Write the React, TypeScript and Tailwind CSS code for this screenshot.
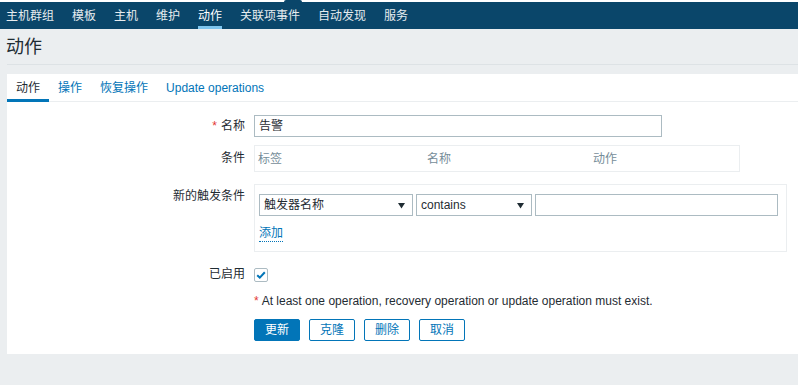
import React from "react";

const FONT = "font-['Liberation_Sans','Noto_Sans_CJK_SC',sans-serif]";

const navItems = ["主机群组", "模板", "主机", "维护", "动作", "关联项事件", "自动发现", "服务"];
const tabs = ["动作", "操作", "恢复操作", "Update operations"];

function Caret() {
  return (
    <svg width="7" height="7" viewBox="0 0 7 7" className="shrink-0">
      <path d="M0 1 L7 1 L3.5 6.5 Z" fill="#1f2c33" />
    </svg>
  );
}

function Select({ value, width }: { value: string; width: string }) {
  return (
    <div
      className={`${width} h-[22px] border border-[#acbbc2] bg-white flex items-center justify-between pl-[4px] pr-[7px] text-[12px] text-[#1f2c33] leading-[14px]`}
    >
      <span>{value}</span>
      <Caret />
    </div>
  );
}

function Row({
  label,
  required,
  children,
  labelClass = "pt-[4px]",
}: {
  label: string;
  required?: boolean;
  children: React.ReactNode;
  labelClass?: string;
}) {
  return (
    <div className="flex">
      <div className={`w-[238px] shrink-0 text-right text-[12px] leading-[14px] text-[#1f2c33] ${labelClass}`}>
        {required && <span className="text-[#e33734] mr-[4px]">*</span>}
        {label}
      </div>
      <div className="ml-[9px]">{children}</div>
    </div>
  );
}

export default function App() {
  return (
    <div className={`${FONT} w-full min-h-[385px] bg-[#ebeef0] text-[#1f2c33]`}>
      {/* top strip */}
      <div className="relative h-[2px] bg-white">
        <div className="absolute left-[284px] top-0 w-[18px] h-[2px] rounded-t-full bg-[#0a466a]" />
      </div>

      {/* main nav */}
      <nav className="h-[27px] bg-[#0a466a] flex pl-[6px] gap-[18px]">
        {navItems.map((n) => {
          const active = n === "动作";
          return (
            <div key={n} className="relative flex items-center h-full">
              <span className={`text-[12px] leading-[14px] ${active ? "text-white" : "text-[#e6ecef]"}`}>{n}</span>
              {active && <div className="absolute left-0 right-0 bottom-0 h-[3px] bg-[#7ec5ee]" />}
            </div>
          );
        })}
      </nav>

      <div className="pl-[7px]">
        {/* page title */}
        <div className="h-[36px] border-b border-[#dde2e5] flex items-center">
          <h1 className="text-[18px] leading-[20px] font-normal -ml-[1px]">动作</h1>
        </div>

        {/* card */}
        <div className="mt-[9px] bg-white pb-[13px]">
          <div className="flex h-[28px] border-b border-[#ebeef0]">
            {tabs.map((t, i) => (
              <div key={t} className="relative flex items-center px-[9px] h-full">
                <span className={`text-[12px] leading-[14px] ${i === 0 ? "text-[#1f2c33]" : "text-[#0275b8]"}`}>{t}</span>
                {i === 0 && <div className="absolute left-0 right-0 -bottom-[1px] h-[3px] bg-[#0275b8]" />}
              </div>
            ))}
          </div>

          <div className="pt-[13px] flex flex-col">
            <Row label="名称" required>
              <div className="w-[408px] h-[22px] border border-[#acbbc2] flex items-center pl-[4px] text-[12px] leading-[14px]">
                告警
              </div>
            </Row>

            <div className="mt-[8px]">
              <Row label="条件" labelClass="pt-[6px]">
                <div className="w-[486px] h-[27px] border border-[#ebeef0] grid grid-cols-[169px_166px_1fr] items-center text-[12px] leading-[14px] text-[#768d99]">
                  <span className="pl-[3px]">标签</span>
                  <span className="pl-[3px]">名称</span>
                  <span className="pl-[3px]">动作</span>
                </div>
              </Row>
            </div>

            <div className="mt-[12px]">
              <Row label="新的触发条件" labelClass="pt-[5px]">
                <div className="w-[533px] h-[68px] border border-[#ebeef0] pt-[9px] pl-[4px] pr-[8px]">
                  <div className="flex gap-[3px]">
                    <Select value="触发器名称" width="w-[154px]" />
                    <Select value="contains" width="w-[116px]" />
                    <div className="flex-1 h-[22px] border border-[#acbbc2] bg-white" />
                  </div>
                  <div className="mt-[10px] flex">
                    <span className="text-[12px] leading-[14px] text-[#0275b8] border-b border-dotted border-[#0275b8] pb-[1px]">
                      添加
                    </span>
                  </div>
                </div>
              </Row>
            </div>

            <div className="mt-[15px]">
              <Row label="已启用" labelClass="pt-[0px]">
                <div className="w-[14px] h-[14px] mt-[1px] border border-[#acbbc2] rounded-[2px] bg-white flex items-center justify-center">
                  <svg width="10" height="8" viewBox="0 0 10 8">
                    <path d="M1.2 4.2 L3.8 6.6 L8.8 1.2" fill="none" stroke="#0275b8" strokeWidth="2" />
                  </svg>
                </div>
              </Row>
            </div>

            <div className="mt-[12px] ml-[247px] text-[12px] leading-[14px]">
              <span className="text-[#e33734] mr-[3px]">*</span>
              At least one operation, recovery operation or update operation must exist.
            </div>

            <div className="mt-[11px] ml-[247px] flex gap-[9px]">
              <button className="h-[22px] px-[10px] rounded-[2px] border border-[#0275b8] bg-[#0275b8] text-white text-[12px] leading-[14px]">
                更新
              </button>
              {["克隆", "删除", "取消"].map((b) => (
                <button
                  key={b}
                  className="h-[22px] px-[10px] rounded-[2px] border border-[#0275b8] bg-white text-[#0275b8] text-[12px] leading-[14px]"
                >
                  {b}
                </button>
              ))}
            </div>
          </div>
        </div>
      </div>
    </div>
  );
}
